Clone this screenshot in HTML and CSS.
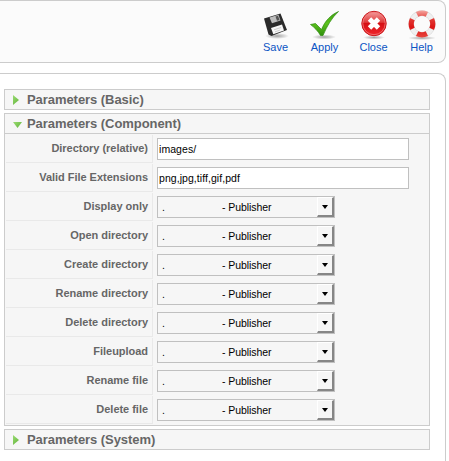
FILE: index.html
```
<!DOCTYPE html>
<html lang="en">
<head>
<meta charset="utf-8">
<title>Parameters</title>
<link rel="stylesheet" href="styles.css">
</head>
<body>
<header class="toolbar">
  <a class="tool"><svg width="32" height="32" viewBox="0 0 32 32">
    <defs>
      <radialGradient id="sh"><stop offset="0" stop-color="#000" stop-opacity=".35"/><stop offset="1" stop-color="#000" stop-opacity="0"/></radialGradient>
      <linearGradient id="gr" x1="0" y1="0" x2="0" y2="1"><stop offset="0" stop-color="#3fa012"/><stop offset=".5" stop-color="#5cc21c"/><stop offset="1" stop-color="#2f8f0c"/></linearGradient>
      <linearGradient id="rd" x1="0" y1="0" x2="0" y2="1"><stop offset="0" stop-color="#f3a0a0"/><stop offset=".45" stop-color="#e03a3a"/><stop offset=".5" stop-color="#d60f14"/><stop offset="1" stop-color="#f0282c"/></linearGradient>
      <linearGradient id="ring" gradientUnits="userSpaceOnUse" x1="0" y1="3" x2="0" y2="30"><stop offset="0" stop-color="#f4a09a"/><stop offset=".3" stop-color="#e23a34"/><stop offset=".6" stop-color="#dc1616"/><stop offset="1" stop-color="#e8473f"/></linearGradient>
    </defs>
    <ellipse cx="17" cy="28" rx="12" ry="3" fill="url(#sh)"/>
    <path d="M4 10.500 20.500 5.500 27 22 11.500 28 8.500 26.500Z" fill="#2b2b2b"/>
    <path d="M9.500 9.500 18.500 6.700 20.500 12.500 12 15.200Z" fill="#bdbdbd"/>
    <path d="M15.500 8.500 18 7.700 19.500 12 17 12.800Z" fill="#555"/>
    <path d="M11 20 22 16.500 24 22.500 13.300 26.200Z" fill="#f7f7f7"/>
    <path d="M14 21.800 21 19.500M15 23.800 20 22.100" stroke="#bbb" stroke-width=".7"/>
  </svg><span>Save</span></a>
  <a class="tool"><svg width="32" height="32" viewBox="0 0 32 32">
    <ellipse cx="15" cy="29" rx="12" ry="2.500" fill="url(#sh)"/>
    <path d="M1.500 16.500 6.500 15.500 12.500 21.500C16 13 21.500 7 29.500 3.500 22.500 10 18 18 14 27.500H11.500C9 23 5.500 19.500 1.500 16.500Z" fill="url(#gr)" stroke="#2c8a0c" stroke-width=".7"/>
  </svg><span>Apply</span></a>
  <a class="tool"><svg width="32" height="32" viewBox="0 0 32 32">
    <ellipse cx="16" cy="29.500" rx="11" ry="2" fill="url(#sh)"/>
    <circle cx="16" cy="15.500" r="12.200" fill="url(#rd)" stroke="#c81418"/>
    <circle cx="16" cy="15.500" r="11.200" fill="none" stroke="#f27c7c" stroke-width=".8"/>
    <path d="M11.500 11 20.500 20M20.500 11 11.500 20" stroke="#fff" stroke-width="4.800"/>
  </svg><span>Close</span></a>
  <a class="tool"><svg width="32" height="32" viewBox="0 0 32 32">
    <ellipse cx="16" cy="30" rx="14" ry="2" fill="url(#sh)"/>
    <circle cx="16" cy="16" r="10.800" fill="none" stroke="#cfcfcf" stroke-width="5.400"/>
    <circle cx="16" cy="16" r="10.800" fill="none" stroke="#f0f0f0" stroke-width="4.600"/>
    <circle cx="16" cy="16" r="10.800" fill="none" stroke="url(#ring)" stroke-width="5.200" pathLength="80" stroke-dasharray="12 8" stroke-dashoffset="6"/>
  </svg><span>Help</span></a>
</header>
<main class="content">
  <section class="pane"><h3 class="closed">Parameters (Basic)</h3></section>
  <section class="pane">
    <h3 class="open">Parameters (Component)</h3>
    <div class="params">
      <div class="row"><label>Directory (relative)</label><input type="text" value="images/"></div>
      <div class="row"><label>Valid File Extensions</label><input type="text" value="png,jpg,tiff,gif,pdf"></div>
      <div class="row"><label>Display only</label><div class="select"><i>.</i><span>- Publisher</span><b></b></div></div>
      <div class="row"><label>Open directory</label><div class="select"><i>.</i><span>- Publisher</span><b></b></div></div>
      <div class="row"><label>Create directory</label><div class="select"><i>.</i><span>- Publisher</span><b></b></div></div>
      <div class="row"><label>Rename directory</label><div class="select"><i>.</i><span>- Publisher</span><b></b></div></div>
      <div class="row"><label>Delete directory</label><div class="select"><i>.</i><span>- Publisher</span><b></b></div></div>
      <div class="row"><label>Fileupload</label><div class="select"><i>.</i><span>- Publisher</span><b></b></div></div>
      <div class="row"><label>Rename file</label><div class="select"><i>.</i><span>- Publisher</span><b></b></div></div>
      <div class="row"><label>Delete file</label><div class="select"><i>.</i><span>- Publisher</span><b></b></div></div>
    </div>
  </section>
  <section class="pane"><h3 class="closed">Parameters (System)</h3></section>
</main>
</body>
</html>
```
FILE: styles.css
```
* { box-sizing: border-box; }
html, body { height: 100%; overflow: hidden; }
body {
  margin: 0;
  width: 446px;
  background: #fff;
  font: 11px/13px "Liberation Sans", Arial, sans-serif;
  color: #666;
}
.toolbar {
  height: 63px;
  display: flex;
  justify-content: flex-end;
  padding: 7px 0 0;
  background: #fbfbfb;
  border: 1px solid #ccc;
  border-left: 0;
  border-radius: 0 8px 8px 0;
}
.tool {
  width: 49px;
  display: flex;
  flex-direction: column;
  align-items: center;
  color: #0b55c4;
}
.tool:last-child { width: 47px; }
.tool svg { display: block; margin-bottom: 1px; }
.content {
  height: 400px;
  margin-top: 10px;
  padding: 15px 15px 0 4px;
  border: 1px solid #ccc;
  border-width: 1px 1px 0 0;
  border-radius: 0 8px 0 0;
}
.pane {
  margin-bottom: 3px;
  border: 1px solid #ccc;
  background: #f6f6f6;
}
h3 {
  position: relative;
  margin: 0;
  height: 19px;
  padding-left: 22px;
  font: bold 13px/19px "Liberation Sans", Arial, sans-serif;
  letter-spacing: -0.06px;
  color: #666;
}
h3::before {
  content: "";
  position: absolute;
  background: linear-gradient(135deg, #9bdc72, #62b33c);
}
.closed::before {
  left: 8px; top: 5px; width: 6px; height: 10px;
  clip-path: polygon(0 0, 100% 50%, 0 100%);
}
.open::before {
  left: 8px; top: 8px; width: 9px; height: 6px;
  clip-path: polygon(0 0, 100% 0, 50% 100%);
}
.params {
  border-top: 1px solid #ccc;
  padding: 1px;
  display: grid;
  row-gap: 1px;
}
.row { display: flex; height: 28px; }
label {
  width: 147px;
  padding-right: 4px;
  border: 1px solid #e9e9e9;
  border-width: 0 1px 1px 0;
  font-weight: bold;
  line-height: 27px;
  letter-spacing: -0.03px;
  text-align: right;
}
input, .select {
  margin: 3px 0 0 4px;
  height: 22px;
  border: 1px solid #c0c0c0;
  color: #000;
}
input {
  width: 252px;
  padding: 0 1px;
  background: #fff;
  font: 10.500px "Liberation Sans", Arial, sans-serif;
  letter-spacing: 0.06px;
}
.select {
  width: 178px;
  display: flex;
  font-size: 10.500px;
  line-height: 21px;
}
.select i { width: 60px; padding-left: 4px; font-style: normal; }
.select span { flex: 1; padding-left: 4px; letter-spacing: -0.06px; }
.select b {
  width: 17px;
  border: 1px solid #fff;
  border-right: 2px solid #868686;
  border-bottom: 2px solid #868686;
  display: flex;
  align-items: center;
  justify-content: center;
}
.select b::before {
  content: "";
  border: solid transparent;
  border-width: 4px 3.500px 0;
  border-top-color: #000;
}
```
